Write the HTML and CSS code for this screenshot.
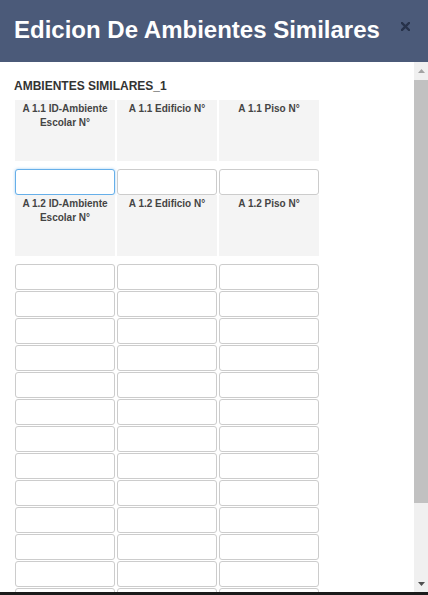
FILE: index.html
```html
<!DOCTYPE html>
<html lang="es">
  <head>
    <meta charset="utf-8" />
    <meta name="viewport" content="width=device-width, initial-scale=1" />
    <title>Edicion De Ambientes Similares</title>
    <link rel="stylesheet" href="styles.css">
  </head>

  <body>
    <div class="modal">
      <div class="modal__header">
        <h1 class="modal__title">Edicion De Ambientes Similares</h1>
        <button class="modal__close" type="button" aria-label="Cerrar">
          <svg width="9" height="9" viewBox="0 0 9 9">
            <path d="M1 1l7 7M8 1l-7 7" stroke="currentColor" stroke-width="2.4" stroke-linecap="square" />
          </svg>
        </button>
      </div>

      <div class="modal__main">
        <div class="modal__body">
          <div class="group__title">AMBIENTES SIMILARES_1</div>

          <!-- grupo 1.1 -->
          <div class="grid">
            <div class="grid__label">A 1.1 ID-Ambiente Escolar N°</div>
            <div class="grid__label">A 1.1 Edificio N°</div>
            <div class="grid__label">A 1.1 Piso N°</div>
          </div>
          <div class="grid grid_inputs">
            <input class="grid__input" type="text" autofocus>
            <input class="grid__input" type="text">
            <input class="grid__input" type="text">
          </div>

          <!-- grupo 1.2 -->
          <div class="grid">
            <div class="grid__label">A 1.2 ID-Ambiente Escolar N°</div>
            <div class="grid__label">A 1.2 Edificio N°</div>
            <div class="grid__label">A 1.2 Piso N°</div>
          </div>
          <div class="grid grid_inputs" id="rows"></div>
        </div>

        <!-- barra de desplazamiento -->
        <div class="scrollbar">
          <div class="scrollbar__btn">
            <svg width="7" height="4" viewBox="0 0 7 4"><path d="M3.5 0L7 4H0z" fill="#a3a3a3" /></svg>
          </div>
          <div class="scrollbar__track">
            <div class="scrollbar__thumb"></div>
          </div>
          <div class="scrollbar__btn">
            <svg width="7" height="4" viewBox="0 0 7 4"><path d="M0 0h7L3.5 4z" fill="#505050" /></svg>
          </div>
        </div>
      </div>

      <div class="modal__edge"></div>
    </div>

    <script>
      "use strict";
      // filas vacías del segundo grupo
      var rows = document.getElementById("rows");
      for (var i = 0; i < 15 * 3; i++) {
        var input = document.createElement("input");
        input.type = "text";
        input.className = "grid__input";
        rows.appendChild(input);
      }
    </script>
  </body>
</html>
```

FILE: styles.css
```css
body {
  margin: 0;
  font-family: "Liberation Sans", Arial, sans-serif;
  color: #333;
  background: #fff;
}

.modal {
  display: flex;
  flex-direction: column;
  height: 595px;
}

.modal__header {
  display: flex;
  align-items: center;
  justify-content: space-between;
  height: 62px;
  padding: 0 18px 2px 14px;
  box-sizing: border-box;
  background: #4b5a79;
  flex: none;
}

.modal__title {
  margin: 0;
  font-size: 24px;
  font-weight: bold;
  color: #fff;
}

.modal__close {
  display: flex;
  padding: 0;
  margin-top: -8px;
  border: 0;
  background: none;
  color: #27324a;
}

.modal__main {
  flex: 1;
  min-height: 0;
  display: flex;
}

.modal__body {
  flex: 1;
  min-width: 0;
  overflow: hidden;
  padding: 16px 14px 14px 15px;
}

.scrollbar {
  flex: none;
  width: 14px;
  display: flex;
  flex-direction: column;
  background: #f0f0f0;
}

.scrollbar__btn {
  flex: none;
  height: 17px;
  display: flex;
  align-items: center;
  justify-content: center;
}

.scrollbar__track {
  flex: 1;
}

.scrollbar__thumb {
  height: 423px;
  margin: 1px 0 0;
  background: #c1c1c1;
}

.modal__edge {
  flex: none;
  height: 3px;
  background: #1b1b1b;
}

.group__title {
  font-size: 12px;
  font-weight: bold;
  line-height: 16px;
  margin: 0 0 6px -1px;
}

.grid {
  display: grid;
  grid-template-columns: repeat(3, 100px);
  column-gap: 2px;
}

.grid_inputs {
  row-gap: 1px;
  margin-top: 8px;
}

.grid__label {
  height: 61px;
  padding: 2px 4px 0;
  box-sizing: border-box;
  background: #f4f4f4;
  font-size: 10px;
  font-weight: bold;
  line-height: 14px;
  text-align: center;
  color: #444;
}

.grid__input {
  height: 26px;
  margin: 0;
  padding: 0 5px;
  box-sizing: border-box;
  border: 1px solid #ccc;
  border-radius: 3px;
  background: #fff;
  font: 13px "Liberation Sans", Arial, sans-serif;
  outline: 0;
}

.grid__input:focus {
  border-color: #66afe9;
  box-shadow: 0 0 3px rgba(102, 175, 233, 0.6);
}
```
